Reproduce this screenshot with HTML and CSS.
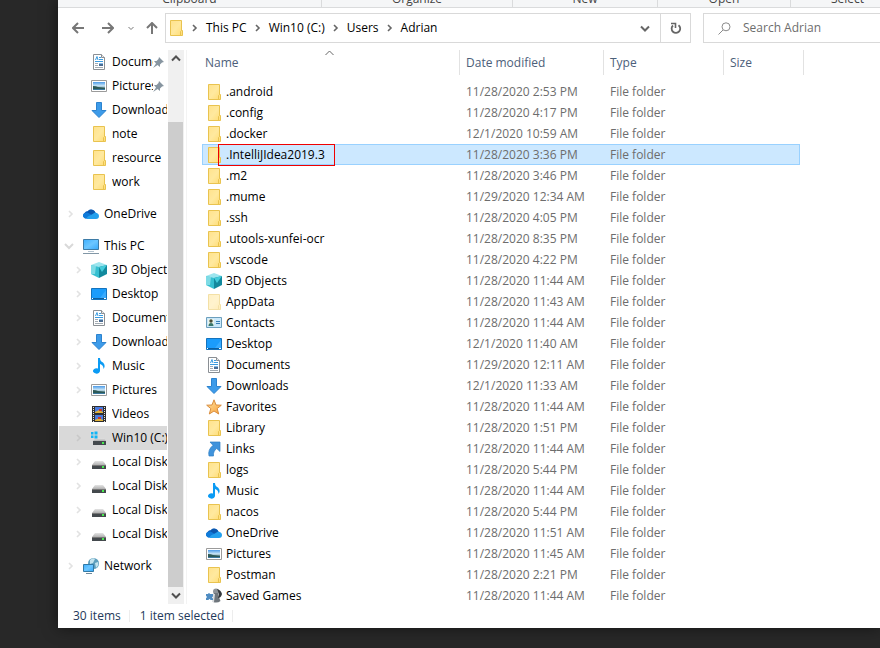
FILE: index.html
```html
<!DOCTYPE html>
<html lang="en">
<head>
  <meta charset="UTF-8" />
  <meta name="viewport" content="width=device-width, initial-scale=1.0"/>
  <title>Adrian</title>
  <link rel="stylesheet" href="styles.css">
</head>
<body>

  <!-- icon sprite -->
  <svg class="sprite" aria-hidden="true">
    <defs>
      <linearGradient id="g-folder" x1="0" y1="0" x2="1" y2="1">
        <stop offset="0" stop-color="#ffe28c"/><stop offset=".5" stop-color="#ffe99f"/><stop offset="1" stop-color="#ffdc74"/>
      </linearGradient>
      <linearGradient id="g-screen" x1="0" y1="0" x2="1" y2="1">
        <stop offset="0" stop-color="#3eb0ff"/><stop offset=".5" stop-color="#6cc6ff"/><stop offset="1" stop-color="#35a8fa"/>
      </linearGradient>
      <linearGradient id="g-drive" x1="0" y1="0" x2="0" y2="1">
        <stop offset="0" stop-color="#e4e4e4"/><stop offset="1" stop-color="#b0b0b0"/>
      </linearGradient>
      <linearGradient id="g-photo" x1="0" y1="0" x2="0" y2="1">
        <stop offset="0" stop-color="#4b9be8"/><stop offset=".5" stop-color="#cfe9f8"/><stop offset=".8" stop-color="#35636a"/><stop offset="1" stop-color="#3f83b8"/>
      </linearGradient>
      <linearGradient id="g-star" x1="0" y1="0" x2="1" y2="1">
        <stop offset="0" stop-color="#ffe2a0"/><stop offset="1" stop-color="#f9a13a"/>
      </linearGradient>
    </defs>
    <symbol id="folder" viewBox="0 0 16 16">
      <path d="M2.5.5h11v10h1v5h-12z" fill="url(#g-folder)" stroke="#e9c34f"/>
      <path d="M12.5 15.5v-4l1-1" fill="none" stroke="#e9c34f"/>
    </symbol>
    <symbol id="doc" viewBox="0 0 16 16">
      <path d="M2.5.5h8l3 3v12h-11z" fill="#fff" stroke="#8a8f94"/>
      <path d="M10.5.5v3h3" fill="#e8e8e8" stroke="#8a8f94"/>
      <path d="M4.500 6l1.500-3.500L7 6M8 3.500h2M8 5.500h4M4 7.500h8" fill="none" stroke="#3a9be0"/>
      <path d="M4 9.500h3M4 11.500h3M4 13.500h8" stroke="#a3abb2"/>
      <path d="M8 9h4v3H8z" fill="#4a6c93"/>
      <path d="M8 9h4v1H8z" fill="#7fb9e8"/>
    </symbol>
    <symbol id="pictures" viewBox="0 0 16 16">
      <path d="M.5 2.500h15v11H.5z" fill="#fff" stroke="#9b9b9b"/>
      <path d="M2 4h12v8H2z" fill="url(#g-photo)"/>
      <path d="M2 8q3 0 5 1l7 1v1H2z" fill="#2d5a58"/>
    </symbol>
    <symbol id="download" viewBox="0 0 16 16">
      <path d="M5.5.5h5v8H15l-7 7-7-7h4.500z" fill="#3d9be9" stroke="#2c83cf"/>
    </symbol>
    <symbol id="cloud" viewBox="0 0 16 16">
      <path d="M3 12.500A3 3 0 0 1 1.500 7 4.500 4.500 0 0 1 5 5 4.500 4.500 0 0 1 12.500 6.500L9 10z" fill="#0a5fc0"/>
      <path d="M5 5a4.500 4.500 0 0 1 7.500 2L10 9 5 7z" fill="#0b57ae"/>
      <path d="M2 12.500A3 3 0 0 1 1 7.500Q4 6 7 8l6 4.500z" fill="#0f7bd9"/>
      <path d="M3.500 13Q4 10 8 9l4-2.500Q16 7 16 10t-3 3z" fill="#23a0ee"/>
    </symbol>
    <symbol id="pc" viewBox="0 0 16 16">
      <path d="M.5 1.500h15v10H.5z" fill="url(#g-screen)" stroke="#3d7ba6"/>
      <path d="M5 13.500h6" stroke="#b4c4d0"/>
      <path d="M0 15.500h16" stroke="#8297a6"/>
    </symbol>
    <symbol id="cube" viewBox="0 0 16 16">
      <path d="M0 3l8-3 8 3-8 3z" fill="#9de5ee"/>
      <path d="M0 3l8 2v11l-8-4z" fill="#35bfd0"/>
      <path d="M16 3L8 5v11l8-4z" fill="#12899d"/>
      <path d="M0 3l5 1-1 8-4 0z" fill="#7edbe5"/>
      <path d="M8 5l8-2-5 7z" fill="#43ccdb"/>
    </symbol>
    <symbol id="desktop" viewBox="0 0 16 16">
      <path d="M.5 2.500h15v11H.5z" fill="#1b9cfb" stroke="#1473bd"/>
      <path d="M9 12l6-8v8z" fill="#38abff"/>
      <path d="M1 12.500h14" stroke="#0c5f9f"/>
      <path d="M1 12.500h1M13 12.500h2" stroke="#fff"/>
    </symbol>
    <symbol id="music" viewBox="0 0 16 16">
      <path d="M7 0h2q0 3 3 4.500 3 3 .5 6.500 0-4-3.500-5v7a3.500 2.700 0 1 1-2-2.500z" fill="#0b9bf4"/>
    </symbol>
    <symbol id="video" viewBox="0 0 16 16">
      <path d="M1 0h14v16H1z" fill="#303030"/>
      <path d="M4 1h8v6H4zM4 9h8v6H4z" fill="#4a7be0"/>
      <path d="M4 6l4-2 4 2v1H4zM4 14l4-2 4 2v1H4z" fill="#e0b238"/>
      <path d="M8 3h3v2H8zM7 11h3v2H7z" fill="#c9392b"/>
      <path d="M2.500 1v15M13.500 1v15" stroke="#e6e6e6" stroke-dasharray="1 1"/>
    </symbol>
    <symbol id="drive" viewBox="0 0 16 16">
      <path d="M4 7h8l3 4H1z" fill="url(#g-drive)"/>
      <path d="M1 11h14v4H1z" fill="#44494d"/>
      <path d="M1 11.500h14" stroke="#777"/>
      <path d="M11 13h2" stroke="#48ea4f" stroke-width="2"/>
    </symbol>
    <symbol id="windrive" viewBox="0 0 16 16">
      <path d="M5 8h8l2 3H2z" fill="url(#g-drive)"/>
      <path d="M2 11h13v4H2z" fill="#44494d"/>
      <path d="M11 13h2" stroke="#48ea4f" stroke-width="2"/>
      <path d="M0 2h2.500v2.500H0zM3.500 1.500h3v3h-3zM0 5.500h2.500V8H0zM3.500 5.500h3v3h-3z" fill="#10b5f5"/>
    </symbol>
    <symbol id="network" viewBox="0 0 16 16">
      <circle cx="10.5" cy="5.500" r="5.500" fill="#5e9fbd"/>
      <path d="M7 2q3-3 5-1l-2 4-3 1zM12 5l3-1q1 4-2 6z" fill="#c4e3ee"/>
      <path d="M.5 6.500h10v7H.5z" fill="url(#g-screen)" stroke="#3279a5"/>
      <path d="M3 15.500h6" stroke="#708b9c"/>
    </symbol>
    <symbol id="contacts" viewBox="0 0 16 16">
      <path d="M.5 2.500h15v10H.5z" fill="#cae8fa" stroke="#6c9fbd"/>
      <path d="M2 4h6v7H2z" fill="#e8f4ed"/>
      <circle cx="5" cy="6" r="1.700" fill="#4a4c36"/>
      <path d="M2.500 11q0-3 2.500-3t2.500 3z" fill="#38766b"/>
      <path d="M10 6.500h4M10 8.500h4" stroke="#397fb5"/>
    </symbol>
    <symbol id="star" viewBox="0 0 16 16">
      <path d="M8 .8l2 5.200 5.300.2-4.100 3.400 1.500 5.400L8 12l-4.700 3 1.500-5.400L.7 6.200 6 6z" fill="url(#g-star)" stroke="#d98d3e"/>
    </symbol>
    <symbol id="link" viewBox="0 0 16 16">
      <path d="M4 1h10v9.500l-3.300-3Q7 10 7.500 15H3Q1.500 9 7 4.300z" fill="#3f93dc" stroke="#2f7fc4" stroke-width=".7"/>
    </symbol>
    <symbol id="games" viewBox="0 0 16 16">
      <circle cx="10" cy="3.500" r="3" fill="#8d9399"/>
      <path d="M8 5h4q1 5 2.500 8-3 2.500-7.500 1z" fill="#6f767c"/>
      <path d="M11 1q4 1 5 5-1 4-4 4 2-4-1-9z" fill="#34383c"/>
      <path d="M7 6l2 0-1 8H6z" fill="#d9dcdf"/>
      <path d="M0 6h2q1-2 2 0h3v2.500q-2 1 0 2V12H4.500q-1-2-2 0H0v-2q2-1 0-2z" fill="#4f8cc2"/>
    </symbol>
    <symbol id="pin" viewBox="0 0 11 11">
      <path d="M6 0l5 5-2 .5-2 2v2.500L4.500 8 0 11l3-4.500L1 4h2.500l2-2z" fill="#8795a0"/>
    </symbol>
    <symbol id="chev" viewBox="0 0 6 8">
      <path d="M1 1l3 3-3 3" fill="none" stroke="currentColor" stroke-width="1.600"/>
    </symbol>
    <symbol id="chev-down" viewBox="0 0 10 7">
      <path d="M1 1.500l4 4 4-4" fill="none" stroke="currentColor" stroke-width="2"/>
    </symbol>
    <symbol id="chev-up" viewBox="0 0 10 7">
      <path d="M1 5.500l4-4 4 4" fill="none" stroke="currentColor" stroke-width="2"/>
    </symbol>
  </svg>

  <div class="window">
    <div class="ribbon">
      <span>Clipboard</span>
      <span>Organize</span>
      <span>New</span>
      <span>Open</span>
      <span>Select</span>
    </div>

    <div class="toolbar">
      <div class="nav-buttons">
        <button class="nav-btn" aria-label="Back"><svg width="12" height="12" viewBox="0 0 12 12"><path d="M12 6H1.500M6 1L1 6l5 5"/></svg></button>
        <button class="nav-btn" aria-label="Forward"><svg width="12" height="12" viewBox="0 0 12 12"><path d="M0 6h10.500M6 1l5 5-5 5"/></svg></button>
        <button class="nav-btn small" aria-label="Recent locations"><svg width="6" height="5" viewBox="0 0 6 5"><path d="M.5 1L3 3.500 5.500 1"/></svg></button>
        <button class="nav-btn" aria-label="Up"><svg width="12" height="12" viewBox="0 0 12 12"><path d="M6 12V1.500M1 6l5-5 5 5"/></svg></button>
      </div>
      <div class="address">
        <svg class="icon"><use href="#folder"/></svg>
        <svg class="sep"><use href="#chev"/></svg>
        <a href="#">This PC</a>
        <svg class="sep"><use href="#chev"/></svg>
        <a href="#">Win10 (C:)</a>
        <svg class="sep"><use href="#chev"/></svg>
        <a href="#">Users</a>
        <svg class="sep"><use href="#chev"/></svg>
        <a href="#">Adrian</a>
        <button class="drop" aria-label="Previous locations"><svg class="arrow"><use href="#chev-down"/></svg></button>
        <button class="refresh" aria-label="Refresh">
          <svg width="12" height="13" viewBox="0 0 12 13"><path d="M8.500 3.200A4.300 4.300 0 1 1 3 3.500" fill="none" stroke="#666" stroke-width="1.800"/><path d="M1 1.500h4.500V6" fill="none" stroke="#666" stroke-width="1.600"/></svg>
        </button>
      </div>
      <div class="search">
        <svg width="13" height="13" viewBox="0 0 13 13"><circle cx="8" cy="4.800" r="4" fill="none" stroke="#8b8b8b"/><path d="M5 8L.5 12.500" stroke="#8b8b8b"/></svg>
        <input type="text" placeholder="Search Adrian" aria-label="Search Adrian">
      </div>
    </div>

    <div class="main">
      <nav class="tree">
        <div class="group">
          <a href="#" class="item sub"><svg class="icon"><use href="#doc"/></svg><span>Documents</span><svg class="pin"><use href="#pin"/></svg></a>
          <a href="#" class="item sub"><svg class="icon"><use href="#pictures"/></svg><span>Pictures</span><svg class="pin"><use href="#pin"/></svg></a>
          <a href="#" class="item sub"><svg class="icon"><use href="#download"/></svg><span>Downloads</span></a>
          <a href="#" class="item sub"><svg class="icon"><use href="#folder"/></svg><span>note</span></a>
          <a href="#" class="item sub"><svg class="icon"><use href="#folder"/></svg><span>resource</span></a>
          <a href="#" class="item sub"><svg class="icon"><use href="#folder"/></svg><span>work</span></a>
        </div>
        <div class="group">
          <a href="#" class="item"><svg class="chev"><use href="#chev"/></svg><svg class="icon"><use href="#cloud"/></svg><span>OneDrive</span></a>
        </div>
        <div class="group">
          <a href="#" class="item open"><svg class="chev"><use href="#chev-down"/></svg><svg class="icon"><use href="#pc"/></svg><span>This PC</span></a>
          <a href="#" class="item sub"><svg class="chev"><use href="#chev"/></svg><svg class="icon"><use href="#cube"/></svg><span>3D Objects</span></a>
          <a href="#" class="item sub"><svg class="chev"><use href="#chev"/></svg><svg class="icon"><use href="#desktop"/></svg><span>Desktop</span></a>
          <a href="#" class="item sub"><svg class="chev"><use href="#chev"/></svg><svg class="icon"><use href="#doc"/></svg><span>Documents</span></a>
          <a href="#" class="item sub"><svg class="chev"><use href="#chev"/></svg><svg class="icon"><use href="#download"/></svg><span>Downloads</span></a>
          <a href="#" class="item sub"><svg class="chev"><use href="#chev"/></svg><svg class="icon"><use href="#music"/></svg><span>Music</span></a>
          <a href="#" class="item sub"><svg class="chev"><use href="#chev"/></svg><svg class="icon"><use href="#pictures"/></svg><span>Pictures</span></a>
          <a href="#" class="item sub"><svg class="chev"><use href="#chev"/></svg><svg class="icon"><use href="#video"/></svg><span>Videos</span></a>
          <a href="#" class="item sub current"><svg class="chev"><use href="#chev"/></svg><svg class="icon"><use href="#windrive"/></svg><span>Win10 (C:)</span></a>
          <a href="#" class="item sub"><svg class="chev"><use href="#chev"/></svg><svg class="icon"><use href="#drive"/></svg><span>Local Disk</span></a>
          <a href="#" class="item sub"><svg class="chev"><use href="#chev"/></svg><svg class="icon"><use href="#drive"/></svg><span>Local Disk</span></a>
          <a href="#" class="item sub"><svg class="chev"><use href="#chev"/></svg><svg class="icon"><use href="#drive"/></svg><span>Local Disk</span></a>
          <a href="#" class="item sub"><svg class="chev"><use href="#chev"/></svg><svg class="icon"><use href="#drive"/></svg><span>Local Disk</span></a>
        </div>
        <div class="group">
          <a href="#" class="item"><svg class="chev"><use href="#chev"/></svg><svg class="icon"><use href="#network"/></svg><span>Network</span></a>
        </div>
      </nav>

      <div class="scrollbar">
        <button aria-label="Scroll up"><svg class="arrow"><use href="#chev-up"/></svg></button>
        <div class="track"><div class="thumb"></div></div>
        <button aria-label="Scroll down"><svg class="arrow"><use href="#chev-down"/></svg></button>
      </div>

      <div class="list">
        <table>
          <colgroup><col class="c-name"><col class="c-date"><col class="c-type"><col class="c-size"><col class="c-end"></colgroup>
          <thead>
            <tr>
              <th><div>Name<svg class="sort" width="9" height="6" viewBox="0 0 9 6"><path d="M.5 5l4-4 4 4" fill="none" stroke="#666"/></svg></div></th>
              <th><div>Date modified</div></th>
              <th><div>Type</div></th>
              <th class="size"><div>Size</div></th>
              <th class="end"><div></div></th>
            </tr>
          </thead>
          <tbody>
            <tr><td><svg class="icon"><use href="#folder"/></svg><span>.android</span></td><td>11/28/2020 2:53 PM</td><td>File folder</td><td></td></tr>
            <tr><td><svg class="icon"><use href="#folder"/></svg><span>.config</span></td><td>11/28/2020 4:17 PM</td><td>File folder</td><td></td></tr>
            <tr><td><svg class="icon"><use href="#folder"/></svg><span>.docker</span></td><td>12/1/2020 10:59 AM</td><td>File folder</td><td></td></tr>
            <tr class="selected"><td><svg class="icon"><use href="#folder"/></svg><span class="marked">.IntelliJIdea2019.3</span></td><td>11/28/2020 3:36 PM</td><td>File folder</td><td></td></tr>
            <tr><td><svg class="icon"><use href="#folder"/></svg><span>.m2</span></td><td>11/28/2020 3:46 PM</td><td>File folder</td><td></td></tr>
            <tr><td><svg class="icon"><use href="#folder"/></svg><span>.mume</span></td><td>11/29/2020 12:34 AM</td><td>File folder</td><td></td></tr>
            <tr><td><svg class="icon"><use href="#folder"/></svg><span>.ssh</span></td><td>11/28/2020 4:05 PM</td><td>File folder</td><td></td></tr>
            <tr><td><svg class="icon"><use href="#folder"/></svg><span>.utools-xunfei-ocr</span></td><td>11/28/2020 8:35 PM</td><td>File folder</td><td></td></tr>
            <tr><td><svg class="icon"><use href="#folder"/></svg><span>.vscode</span></td><td>11/28/2020 4:22 PM</td><td>File folder</td><td></td></tr>
            <tr><td><svg class="icon"><use href="#cube"/></svg><span>3D Objects</span></td><td>11/28/2020 11:44 AM</td><td>File folder</td><td></td></tr>
            <tr class="hidden-item"><td><svg class="icon"><use href="#folder"/></svg><span>AppData</span></td><td>11/28/2020 11:43 AM</td><td>File folder</td><td></td></tr>
            <tr><td><svg class="icon"><use href="#contacts"/></svg><span>Contacts</span></td><td>11/28/2020 11:44 AM</td><td>File folder</td><td></td></tr>
            <tr><td><svg class="icon"><use href="#desktop"/></svg><span>Desktop</span></td><td>12/1/2020 11:40 AM</td><td>File folder</td><td></td></tr>
            <tr><td><svg class="icon"><use href="#doc"/></svg><span>Documents</span></td><td>11/29/2020 12:11 AM</td><td>File folder</td><td></td></tr>
            <tr><td><svg class="icon"><use href="#download"/></svg><span>Downloads</span></td><td>12/1/2020 11:33 AM</td><td>File folder</td><td></td></tr>
            <tr><td><svg class="icon"><use href="#star"/></svg><span>Favorites</span></td><td>11/28/2020 11:44 AM</td><td>File folder</td><td></td></tr>
            <tr><td><svg class="icon"><use href="#folder"/></svg><span>Library</span></td><td>11/28/2020 1:51 PM</td><td>File folder</td><td></td></tr>
            <tr><td><svg class="icon"><use href="#link"/></svg><span>Links</span></td><td>11/28/2020 11:44 AM</td><td>File folder</td><td></td></tr>
            <tr><td><svg class="icon"><use href="#folder"/></svg><span>logs</span></td><td>11/28/2020 5:44 PM</td><td>File folder</td><td></td></tr>
            <tr><td><svg class="icon"><use href="#music"/></svg><span>Music</span></td><td>11/28/2020 11:44 AM</td><td>File folder</td><td></td></tr>
            <tr><td><svg class="icon"><use href="#folder"/></svg><span>nacos</span></td><td>11/28/2020 5:44 PM</td><td>File folder</td><td></td></tr>
            <tr><td><svg class="icon"><use href="#cloud"/></svg><span>OneDrive</span></td><td>11/28/2020 11:51 AM</td><td>File folder</td><td></td></tr>
            <tr><td><svg class="icon"><use href="#pictures"/></svg><span>Pictures</span></td><td>11/28/2020 11:45 AM</td><td>File folder</td><td></td></tr>
            <tr><td><svg class="icon"><use href="#folder"/></svg><span>Postman</span></td><td>11/28/2020 2:21 PM</td><td>File folder</td><td></td></tr>
            <tr><td><svg class="icon"><use href="#games"/></svg><span>Saved Games</span></td><td>11/28/2020 11:44 AM</td><td>File folder</td><td></td></tr>
          </tbody>
        </table>
      </div>
    </div>

    <div class="status">
      <span>30 items</span>
      <span>1 item selected</span>
    </div>
  </div>

</body>
</html>
```

FILE: styles.css
```css
* {
  box-sizing: border-box;
}

body {
  margin: 0;
  padding: 0 0 20px 58px;
  height: 100vh;
  background: #282828;
  font-family: "Segoe UI", "Open Sans", "Noto Sans", sans-serif;
  font-size: 12px;
  line-height: 20px;
  color: #000;
  overflow: hidden;
}

a {
  color: inherit;
  text-decoration: none;
}

button {
  display: flex;
  align-items: center;
  justify-content: center;
  padding: 0;
  border: none;
  background: none;
  color: #666;
}

svg {
  display: block;
  flex: none;
}

.sprite {
  position: absolute;
  width: 0;
  height: 0;
}

.icon {
  width: 16px;
  height: 16px;
}

.arrow {
  width: 10px;
  height: 7px;
}

.window {
  display: flex;
  flex-direction: column;
  height: 100%;
  background: #fff;
  box-shadow: 0 0 14px rgba(0, 0, 0, 0.5);
}

/* ribbon */
.ribbon {
  display: grid;
  grid-template-columns: 264px 191px 145px 133px 114px;
  align-content: end;
  flex: none;
  height: 8px;
  overflow: hidden;
  background: #f5f6f7;
  border-bottom: 1px solid #dadbdc;
  line-height: 16px;
  color: #444;
}

.ribbon span {
  text-align: center;
  border-right: 1px solid #dadbdc;
}

/* toolbar */
.toolbar {
  display: flex;
  flex: none;
  height: 42px;
  padding: 5px 0 7px;
}

.nav-buttons {
  display: flex;
  align-items: center;
  flex: none;
  width: 107px;
  padding-left: 8px;
}

.nav-btn {
  width: 24px;
  height: 24px;
  margin-right: 6px;
}

.nav-btn svg {
  fill: none;
  stroke: #777;
  stroke-width: 2;
}

.nav-btn.small {
  width: 10px;
  margin-right: 4px;
}

.nav-btn.small svg {
  stroke-width: 1;
}

.nav-btn:last-child {
  margin: 0;
}

.address {
  display: flex;
  align-items: center;
  flex: 0 1 526px;
  gap: 8px;
  padding-left: 2px;
  border: 1px solid #d9d9d9;
  white-space: nowrap;
}

.sep {
  width: 6px;
  height: 8px;
  color: #666;
}

.drop {
  width: 30px;
  height: 28px;
  margin-left: auto;
}

.refresh {
  width: 30px;
  height: 28px;
  margin-left: -8px;
  border-left: 1px solid #d9d9d9;
}

.search {
  display: flex;
  align-items: center;
  flex: 1;
  gap: 12px;
  min-width: 0;
  margin-left: 12px;
  padding-left: 14px;
  border: 1px solid #d9d9d9;
  border-right: none;
}

.search input {
  flex: 1;
  min-width: 0;
  padding: 0;
  border: none;
  outline: none;
  background: none;
  font: inherit;
}

.search input::placeholder {
  color: #6d6d6d;
}

/* main area */
.main {
  display: flex;
  flex: 1;
  min-height: 0;
}

.tree {
  flex: none;
  width: 110px;
  padding: 0 1px;
  overflow: hidden;
}

.group {
  margin-bottom: 8px;
}

.item {
  display: flex;
  align-items: center;
  height: 24px;
  padding-left: 24px;
  position: relative;
}

.item.sub {
  padding-left: 32px;
}

.item .icon {
  margin-right: 5px;
}

.item span {
  flex: 1;
  min-width: 0;
  overflow: hidden;
  white-space: nowrap;
}

.item.current {
  background: #d9d9d9;
}

.item .chev {
  position: absolute;
  left: 9px;
  width: 6px;
  height: 8px;
  color: #e2e2e2;
}

.item.sub .chev {
  left: 17px;
}

.item.current .chev {
  color: #c8c8c8;
}

.item.open .chev {
  left: 5px;
  width: 10px;
  color: #d9d9d9;
}

.item .pin {
  width: 11px;
  height: 11px;
  margin-right: 3px;
}

.scrollbar {
  display: flex;
  flex-direction: column;
  flex: none;
  width: 16px;
  background: #f0f0f0;
}

.scrollbar button {
  height: 17px;
  color: #505050;
}

.track {
  flex: 1;
  padding-top: 55px;
}

.thumb {
  height: 100%;
  margin-right: 1px;
  background: #cdcdcd;
}

.list {
  flex: 1;
  min-width: 0;
  margin-left: 2px;
  padding-left: 15px;
  overflow: hidden;
  border-left: 1px solid #f3f3f3;
}

table {
  width: 602px;
  table-layout: fixed;
  border-collapse: collapse;
}

.c-name { width: 258px; }
.c-date { width: 144px; }
.c-type { width: 120px; }
.c-size { width: 76px; }
.c-end { width: 4px; }

th {
  height: 31px;
  padding: 0;
  vertical-align: top;
  text-align: left;
  font-weight: normal;
  color: #4c607a;
}

th div {
  position: relative;
  height: 25px;
  padding-left: 6px;
  line-height: 25px;
  border-right: 1px solid #e2e2e2;
}

th:first-child div {
  padding-left: 3px;
}

th.size div {
  border-right: none;
}

th.end div {
  padding: 0;
}

.sort {
  position: absolute;
  top: 0;
  left: 50%;
  margin-left: -6px;
}

td {
  height: 21px;
  padding: 0 0 0 6px;
  line-height: 21px;
  white-space: nowrap;
  color: #6d6d6d;
}

td:first-child {
  display: flex;
  align-items: center;
  gap: 4px;
  padding-left: 4px;
  color: #000;
}

.hidden-item .icon {
  opacity: 0.5;
}

.selected td {
  background: #cce8ff;
  box-shadow: inset 0 1px #99d1ff, inset 0 -1px #99d1ff;
}

.selected td:first-child {
  box-shadow: inset 0 1px #99d1ff, inset 0 -1px #99d1ff, inset 1px 0 #99d1ff;
}

.selected td:last-child {
  box-shadow: inset 0 1px #99d1ff, inset 0 -1px #99d1ff, inset -1px 0 #99d1ff;
}

.marked {
  position: relative;
}

.marked::after {
  content: "";
  position: absolute;
  top: 0;
  left: -8px;
  width: 115px;
  height: 20px;
  border: 1px solid #f00000;
}

/* status bar */
.status {
  display: flex;
  align-items: center;
  flex: none;
  height: 24px;
  padding-left: 15px;
  color: #1e395b;
}

.status span {
  margin-right: 10px;
  padding-right: 8px;
  line-height: 12px;
  border-right: 1px solid #ededed;
}
```
